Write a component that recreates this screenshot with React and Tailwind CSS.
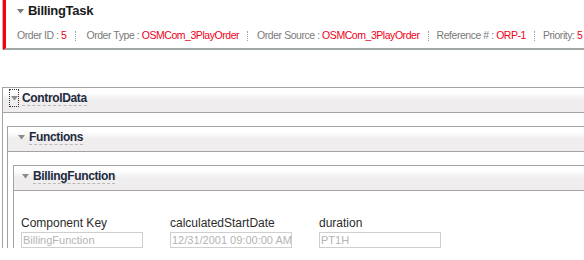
import React from "react";

const font = { fontFamily: '"Liberation Sans", Arial, sans-serif' };

function Tri({ focus }) {
  return (
    <span
      className={
        "inline-flex items-center justify-center w-[8px] h-[16px] " +
        (focus ? "outline-1 outline-dotted outline-[#333] outline-offset-0" : "")
      }
    >
      <svg width="7" height="5" viewBox="0 0 7 5">
        <path d="M0 0 H7 L3.5 4.5 Z" fill="#8a8a8a" />
      </svg>
    </span>
  );
}

function Header({ title, focus, padL }) {
  return (
    <div
      className={
        "h-[25px] pb-[4px] flex items-center border-b border-[#a3a3a3] bg-[linear-gradient(#ffffff_20%,#efeded_50%)] gap-[4px] " +
        padL
      }
    >
      <Tri focus={focus} />
      <span className="text-[12px] font-bold text-[#1d2b3e] tracking-[-0.35px] border-b border-dashed border-[#b8b8b8] leading-[14px]">
        {title}
      </span>
    </div>
  );
}

function Sep() {
  return <span className="h-[10px] border-l border-dotted border-[#a0a0a0] mx-[8px]" />;
}

function Info({ label, value }) {
  return (
    <span className="whitespace-nowrap">
      <span className="text-[#7a7a7a]">{label}</span>
      <span className="text-[#f00018]">{value}</span>
    </span>
  );
}

function Field({ label, value, w }) {
  return (
    <div className="flex flex-col w-[149px]">
      <span className="text-[12px] text-[#2b2b2b] leading-[14px] mb-[2px]">{label}</span>
      <div className={"h-[16px] border border-[#cfcfcf] flex items-center px-[1px] text-[11px] text-[#b4b4b4] whitespace-nowrap overflow-hidden " + w}>
        {value}
      </div>
    </div>
  );
}

export default function App() {
  return (
    <div className="w-[584px] h-[260px] overflow-hidden bg-white" style={font}>
      {/* Top task card */}
      <div className="ml-[2px] border-l border-[#b5b5b5] rounded-bl-[2px]">
        <div className="h-[50px] border-l-[3px] border-[#ff0000] border-b-2 border-b-[#a2a8a2] flex flex-col pl-[11px]">
          <div className="h-[22px] flex items-center gap-[4px]">
            <svg width="7" height="5" viewBox="0 0 7 5">
              <path d="M0 0 H7 L3.5 4.5 Z" fill="#7a7a7a" />
            </svg>
            <span className="text-[13px] font-bold text-[#1a1a1a] tracking-[-0.3px]">BillingTask</span>
          </div>
          <div className="h-[26px] pt-[2px] flex items-center text-[10.5px] tracking-[-0.45px]">
            <Info label="Order ID : " value="5" />
            <span className="h-[10px] border-l border-dotted border-[#a0a0a0] ml-[9px] mr-[10px]" />
            <Info label="Order Type : " value="OSMCom_3PlayOrder" />
            <span className="h-[10px] border-l border-dotted border-[#a0a0a0] ml-[8px] mr-[9px]" />
            <Info label="Order Source : " value="OSMCom_3PlayOrder" />
            <Sep />
            <Info label="Reference # : " value="ORP-1" />
            <Sep />
            <Info label="Priority: " value="5" />
          </div>
        </div>
      </div>

      {/* ControlData panel */}
      <div className="mt-[37px] ml-[2px] border-t border-l border-[#a3a3a3]">
        <Header title="ControlData" focus padL="pl-[7px]" />
        <div className="pt-[13px] pl-[4px]">
          {/* Functions panel */}
          <div className="border-t border-l border-[#a3a3a3]">
            <Header title="Functions" padL="pl-[9px]" />
            <div className="pt-[13px] pl-[5px]">
              {/* BillingFunction panel */}
              <div className="border-t border-l border-[#a3a3a3]">
                <Header title="BillingFunction" padL="pl-[7px]" />
                <div className="pt-[25px] pl-[7px] flex">
                  <Field label="Component Key" value="BillingFunction" w="w-[122px]" />
                  <Field label="calculatedStartDate" value="12/31/2001 09:00:00 AM" w="w-[122px]" />
                  <Field label="duration" value="PT1H" w="w-[122px]" />
                </div>
              </div>
            </div>
          </div>
        </div>
      </div>
    </div>
  );
}
